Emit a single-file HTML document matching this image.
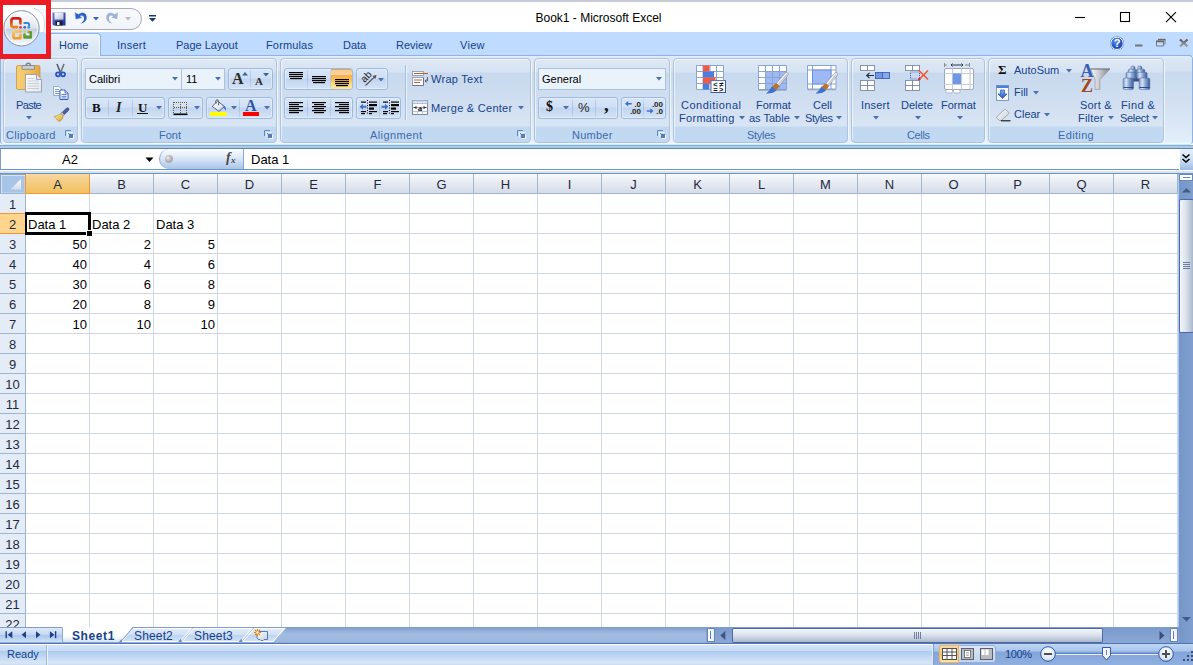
<!DOCTYPE html>
<html>
<head>
<meta charset="utf-8">
<title>Book1 - Microsoft Excel</title>
<style>
html,body{margin:0;padding:0;}
body{width:1193px;height:665px;overflow:hidden;background:#fff;font-family:"Liberation Sans",sans-serif;font-size:11px;color:#15428b;}
#app{position:relative;width:1193px;height:665px;overflow:hidden;background:#fff;}
.abs,#app div,#app span,#app svg{position:absolute;}
#app div,#app span{white-space:nowrap;line-height:1;}
/* title bar */
#titlebar{left:0;top:0;width:1193px;height:32px;background:#fff;}
#topline{left:0;top:0;width:1193px;height:2px;background:#c5ccd8;}
#title{left:0;top:12px;width:1197px;text-align:center;font-size:12px;color:#000;}
/* tab strip */
#tabstrip{left:0;top:32px;width:1193px;height:24px;background:#bfdbff;}
.tab{top:40px;font-size:11px;color:#15428b;}
#hometab{left:48px;top:33px;width:53px;height:23px;border:1px solid #8db2e3;border-bottom:none;border-radius:4px 4px 0 0;box-sizing:border-box;background:linear-gradient(#eaf2fc,#dce8f7 60%,#dbe6f4);box-shadow:inset 1px 1px 0 #f4f9ff,inset -1px 0 0 #f4f9ff;}
/* ribbon */
#ribbon{left:0px;top:55px;width:1193px;height:90px;box-sizing:border-box;border:1px solid #8db2e3;border-bottom-color:#b5f5ff;border-radius:4px;background:linear-gradient(#e3ecf8 0px,#dbe6f4 3px,#d5e1f1 15px,#c9daee 16px,#d3e1f2 50px,#e3eefb 86px,#f0f8ff 87px,#f0f8ff 88px);}
#ribbonshadow{left:0;top:145px;width:1193px;height:4px;background:linear-gradient(#94a9c9 0,#94a9c9 1px,#afc6e6 1px,#b2c9e8 3px,#6186b5 3px);}
.grp{top:58px;height:85px;box-sizing:border-box;border:1px solid #b1c4de;border-radius:4px;box-shadow:1px 1px 0 #f0f6fd,inset 1px 1px 0 rgba(255,255,255,.55);background:linear-gradient(#dee8f5 0px,#d6e3f3 13px,#c8d9ee 14px,#d2e0f1 50px,#d8e5f4 67px,#c2d8f1 68px,#c1d9f3 83px);}
.glabel{top:130px;font-size:11px;color:#3e6aaa;text-align:center;}
.rt{font-size:11px;color:#15428b;}
.btnrow{height:22px;box-sizing:border-box;border:1px solid #9ebae1;border-radius:3px;background:linear-gradient(#d7e5f7 0,#d0e0f5 9px,#c2d5ef 10px,#d4e3f6 20px);box-shadow:inset 0 0 0 1px rgba(255,255,255,.35);}
.bsep{top:0;width:1px;height:20px;background:linear-gradient(rgba(158,186,225,.2),#a9c1e4 50%,rgba(158,186,225,.2));}
.combo{height:22px;box-sizing:border-box;border:1px solid #abc1de;background:#eaf2fb;color:#000;font-size:11px;}
/* formula bar */
#fbar{left:0;top:148px;width:1193px;height:26px;background:#c4daf5;}
/* grid */
#grid{left:0;top:174px;width:1179px;height:453px;background:#fff;overflow:hidden;}
.ch{top:0;height:19px;width:63px;text-align:center;font-size:13px;color:#1f2b3d;line-height:21px !important;background:linear-gradient(#f9fbfd,#e6ebf3 45%,#d6dce8);border-right:1px solid #9eb6ce;border-bottom:1px solid #9eb6ce;}
.rh{left:0;width:25px;height:19px;text-align:center;font-size:13px;color:#1f2b3d;line-height:21px !important;background:#e4ecf7;border-right:1px solid #9eb6ce;border-bottom:1px solid #9eb6ce;}
.c{font-size:13px;color:#000;height:19px;line-height:22px !important;}
.r{text-align:right;width:60px;}
/* bottom */
#tabbar{left:0;top:627px;width:1193px;height:16px;background:linear-gradient(#7b9ccb 0,#8eabd6 3px,#a3bbe0 7px,#9cb7de 15px,#8aa8d4 16px);}
#statusbar{left:0;top:643px;width:1193px;height:22px;background:linear-gradient(#4f76b0 0,#4f76b0 1px,#fff 1px,#fff 2px,#d5e4f9 2px,#c5dbf6 8px,#adcbf0 8px,#d9e6f7 20px,#c9dcf4 22px);}
</style>
</head>
<body>
<div id="app">
<!-- TITLE BAR -->
<div id="titlebar"></div>
<div id="topline"></div>
<div id="title">Book1 - Microsoft Excel</div>
<!-- TAB STRIP -->
<div id="tabstrip"></div>
<div id="ribbonshadow"></div>
<div id="ribbon"></div>
<div id="hometab"></div>
<span class="tab" style="left:59px">Home</span>
<span class="tab" style="left:117px;letter-spacing:0.25px">Insert</span>
<span class="tab" style="left:176px">Page Layout</span>
<span class="tab" style="left:266px;letter-spacing:0.15px">Formulas</span>
<span class="tab" style="left:343px">Data</span>
<span class="tab" style="left:396px">Review</span>
<span class="tab" style="left:460px;letter-spacing:0.3px">View</span>
<!-- RIBBON -->
<!--GROUPS-->
<!-- group frames -->
<div class="grp" style="left:3px;width:75px"></div>
<div class="grp" style="left:81px;width:196px"></div>
<div class="grp" style="left:280px;width:251px"></div>
<div class="grp" style="left:534px;width:136px"></div>
<div class="grp" style="left:673px;width:175px"></div>
<div class="grp" style="left:851px;width:134px"></div>
<div class="grp" style="left:988px;width:176px"></div>
<!-- group labels -->
<span class="glabel" style="left:6px;letter-spacing:0.3px">Clipboard</span>
<span class="glabel" style="left:159px">Font</span>
<span class="glabel" style="left:370px;letter-spacing:0.4px">Alignment</span>
<span class="glabel" style="left:572px;letter-spacing:0.25px">Number</span>
<span class="glabel" style="left:747px;letter-spacing:-0.3px">Styles</span>
<span class="glabel" style="left:907px;letter-spacing:-0.35px">Cells</span>
<span class="glabel" style="left:1058px;letter-spacing:0.35px">Editing</span>
<svg style="left:65px;top:130px" width="9" height="9"><path d="M0.500 6V0.500H6" fill="none" stroke="#6688bd" stroke-width="1"/><path d="M2.500 7.500V2.500H7.500" fill="none" stroke="#fff" stroke-width="0.800" opacity="0.800"/><rect x="4" y="4" width="4" height="4" fill="#5a7cb5"/><path d="M3 3l3 3" stroke="#5a7cb5" stroke-width="1"/><path d="M5 8.500h3.500V5" fill="none" stroke="#fff" stroke-width="0.800"/></svg><svg style="left:264px;top:130px" width="9" height="9"><path d="M0.500 6V0.500H6" fill="none" stroke="#6688bd" stroke-width="1"/><path d="M2.500 7.500V2.500H7.500" fill="none" stroke="#fff" stroke-width="0.800" opacity="0.800"/><rect x="4" y="4" width="4" height="4" fill="#5a7cb5"/><path d="M3 3l3 3" stroke="#5a7cb5" stroke-width="1"/><path d="M5 8.500h3.500V5" fill="none" stroke="#fff" stroke-width="0.800"/></svg><svg style="left:517px;top:130px" width="9" height="9"><path d="M0.500 6V0.500H6" fill="none" stroke="#6688bd" stroke-width="1"/><path d="M2.500 7.500V2.500H7.500" fill="none" stroke="#fff" stroke-width="0.800" opacity="0.800"/><rect x="4" y="4" width="4" height="4" fill="#5a7cb5"/><path d="M3 3l3 3" stroke="#5a7cb5" stroke-width="1"/><path d="M5 8.500h3.500V5" fill="none" stroke="#fff" stroke-width="0.800"/></svg><svg style="left:657px;top:130px" width="9" height="9"><path d="M0.500 6V0.500H6" fill="none" stroke="#6688bd" stroke-width="1"/><path d="M2.500 7.500V2.500H7.500" fill="none" stroke="#fff" stroke-width="0.800" opacity="0.800"/><rect x="4" y="4" width="4" height="4" fill="#5a7cb5"/><path d="M3 3l3 3" stroke="#5a7cb5" stroke-width="1"/><path d="M5 8.500h3.500V5" fill="none" stroke="#fff" stroke-width="0.800"/></svg>
<!-- CLIPBOARD -->
<span class="rt" style="left:16px;top:100px;letter-spacing:-0.6px">Paste</span>

<!-- clipboard icons -->
<svg id="ic-paste" style="left:15px;top:62px" width="28" height="32">
<defs><linearGradient id="pb" x1="0" y1="0" x2="1" y2="0"><stop offset="0" stop-color="#f6cf7a"/><stop offset="0.5" stop-color="#f3c263"/><stop offset="1" stop-color="#e2a843"/></linearGradient>
<linearGradient id="pp" x1="0" y1="0" x2="1" y2="1"><stop offset="0" stop-color="#ffffff"/><stop offset="1" stop-color="#e1e6ef"/></linearGradient></defs>
<rect x="1.5" y="3.500" width="23.500" height="24" rx="1.500" fill="url(#pb)" stroke="#c8963f" stroke-width="0.800"/>
<path d="M7 3.500h12.500v3.800H7z" fill="#c9ced6" stroke="#7d838d" stroke-width="0.800"/>
<path d="M11 3.500c0-3 4.500-3 4.500 0" fill="none" stroke="#7d838d" stroke-width="1.300"/>
<path d="M10.500 12.500h11l5 5v12.500h-16z" fill="url(#pp)" stroke="#8a93a6" stroke-width="0.800"/>
<path d="M21.500 12.500v5h5" fill="#dfe4ee" stroke="#8a93a6" stroke-width="0.800"/>
<path d="M12.500 16.500h7M12.500 19h11.500M12.500 21.500h11.500M12.500 24h11.500M12.500 26.500h11.500" stroke="#c3c8d2" stroke-width="0.900"/>
</svg>
<svg style="left:26px;top:116px" width="6" height="4"><path d="M0 0h6l-3 3.500z" fill="#4d6fae"/></svg>
<svg id="ic-cut" style="left:55px;top:63px" width="11" height="15">
<path d="M2 1l3.200 8M9 1L5.800 9" stroke="#6b7380" stroke-width="1.600" fill="none"/>
<path d="M2 1l3.200 8" stroke="#3c4452" stroke-width="0.600" fill="none"/>
<circle cx="3" cy="11.300" r="2" fill="none" stroke="#2a55c0" stroke-width="1.700"/>
<circle cx="8" cy="11.300" r="2" fill="none" stroke="#2a55c0" stroke-width="1.700"/>
<path d="M4.500 9.500l1-1.500 1 1.500" fill="#2a55c0"/>
</svg>
<svg id="ic-copy" style="left:53px;top:86px" width="16" height="14">
<path d="M0.500 0.500h5.500l2.500 2.500v6.500h-8z" fill="#fff" stroke="#8c9ab8" stroke-width="0.800"/>
<path d="M2 3.500h4M2 5.500h5M2 7.500h5" stroke="#5c8ad6" stroke-width="0.900"/>
<path d="M7 4h5l3 3v6.500h-8z" fill="#fff" stroke="#2b50a8" stroke-width="0.900"/>
<path d="M12 4v3h3" fill="#d3def0" stroke="#2b50a8" stroke-width="0.800"/>
<path d="M8.500 8.500h5M8.500 10.300h5M8.500 12h5" stroke="#3d6dcc" stroke-width="0.900"/>
</svg>
<svg id="ic-brush" style="left:53px;top:107px" width="17" height="16">
<defs><linearGradient id="br" x1="0" y1="0" x2="1" y2="1"><stop offset="0" stop-color="#fbe9a8"/><stop offset="0.600" stop-color="#e9c35a"/><stop offset="1" stop-color="#b98a2a"/></linearGradient></defs>
<path d="M15.500 1.200c0.800 0.800 0.600 1.600 0 2.200l-4.300 4.300-2.200-2.200 4.300-4.300c0.600-0.600 1.400-0.800 2.200 0z" fill="#4a5aa8" stroke="#2d3570" stroke-width="0.500"/>
<path d="M9 5.500l2.200 2.200-1 1.200-2.400-2.400z" fill="#c9ccd4" stroke="#7b8090" stroke-width="0.500"/>
<path d="M7.800 6.500l2.400 2.400c0 2-2 5-4 5.800L1 9.500c2-0.300 5-1.500 6.800-3z" fill="url(#br)" stroke="#a37a25" stroke-width="0.500"/>
</svg>
<!-- FONT -->
<div class="combo" style="left:85px;top:68px;width:97px"><span style="left:3px;top:5px">Calibri</span></div>
<div class="combo" style="left:181px;top:68px;width:44px"><span style="left:4px;top:5px">11</span></div>
<div class="btnrow" style="left:228px;top:68px;width:45px"><div class="bsep" style="left:21px"></div></div>
<div class="btnrow" style="left:85px;top:97px;width:80px"><div class="bsep" style="left:22px"></div><div class="bsep" style="left:46px"></div></div>
<div class="btnrow" style="left:168px;top:97px;width:35px"></div>
<div class="btnrow" style="left:206px;top:97px;width:67px"><div class="bsep" style="left:32px"></div></div>

<!-- font icons -->
<svg style="left:172px;top:77px" width="6" height="4"><path d="M0 0h6l-3 3.500z" fill="#4d6fae"/></svg><svg style="left:215px;top:77px" width="6" height="4"><path d="M0 0h6l-3 3.500z" fill="#4d6fae"/></svg>
<span style="left:232px;top:71px;font-family:'Liberation Serif',serif;font-weight:bold;font-size:16px;color:#2b2b2b">A</span>
<svg style="left:242px;top:72px" width="6" height="4"><path d="M0 3.500h6l-3-3.500z" fill="#3b62ac"/></svg>
<span style="left:255px;top:76px;font-family:'Liberation Serif',serif;font-weight:bold;font-size:11px;color:#2b2b2b">A</span>
<svg style="left:263px;top:73px" width="6" height="4"><path d="M0 0h6l-3 3.500z" fill="#3b62ac"/></svg>
<span style="left:92px;top:101px;font-family:'Liberation Serif',serif;font-weight:bold;font-size:13px;color:#111">B</span>
<span style="left:116px;top:101px;font-family:'Liberation Serif',serif;font-weight:bold;font-style:italic;font-size:14px;color:#222">I</span>
<span style="left:138px;top:101px;font-family:'Liberation Serif',serif;font-weight:bold;font-size:13px;color:#111">U</span>
<div style="left:137px;top:113px;width:11px;height:1px;background:#111"></div>
<svg style="left:156px;top:106px" width="6" height="4"><path d="M0 0h6l-3 3.500z" fill="#4d6fae"/></svg>
<svg id="ic-border" style="left:173px;top:102px" width="15" height="14"><path d="M1 0.500h13M1 5.500h13M0.500 0v11M7.500 0v11M13.500 0v11" stroke="#6b5a3a" stroke-width="1" stroke-dasharray="1 1" fill="none"/><rect x="0.500" y="11.500" width="14" height="1.600" fill="#000"/></svg>
<svg style="left:194px;top:106px" width="6" height="4"><path d="M0 0h6l-3 3.500z" fill="#4d6fae"/></svg>
<svg id="ic-fill" style="left:209px;top:98px" width="19" height="19">
<defs><linearGradient id="bk" x1="0" y1="0" x2="1" y2="1"><stop offset="0" stop-color="#ffffff"/><stop offset="0.600" stop-color="#e3e9f3"/><stop offset="1" stop-color="#98a9c7"/></linearGradient></defs>
<path d="M8.500 3.200l7 5.200-5.500 5-6.800-5z" fill="url(#bk)" stroke="#3d4658" stroke-width="0.800"/>
<path d="M7.200 5.500c-1.500-2.500 0.500-4.800 2-3.200 0.800 0.900 0.300 3.500 0.300 5" fill="none" stroke="#4a4f5c" stroke-width="0.900"/>
<path d="M15 8c1.800 0.500 2.500 2.500 2 5-0.800-1.500-1.500-2.500-3-3.500z" fill="#3a74d8"/>
<rect x="1" y="14" width="16.500" height="4" fill="#ffff00"/>
</svg>
<svg style="left:231px;top:106px" width="6" height="4"><path d="M0 0h6l-3 3.500z" fill="#4d6fae"/></svg>
<span style="left:245px;top:98px;font-family:'Liberation Serif',serif;font-weight:bold;font-size:16px;color:#2f55a8">A</span>
<div style="left:243px;top:112px;width:16px;height:4px;background:#ff0000"></div>
<svg style="left:264px;top:106px" width="6" height="4"><path d="M0 0h6l-3 3.500z" fill="#4d6fae"/></svg>
<!-- ALIGNMENT -->
<div class="btnrow" style="left:284px;top:68px;width:69px"><div class="bsep" style="left:22px"></div><div class="bsep" style="left:45px"></div><div id="orangebtn" style="left:46px;top:0;width:21px;height:20px;background:linear-gradient(#f5c98f 0,#f9d49c 28%,#fbae48 32%,#fcbd58 55%,#fdd983 75%,#fee69a 100%);border-radius:0 2px 2px 0;box-shadow:inset 0 1px 0 #dfa669"></div></div>
<div class="btnrow" style="left:356px;top:68px;width:32px"></div>
<div class="btnrow" style="left:284px;top:97px;width:69px"><div class="bsep" style="left:22px"></div><div class="bsep" style="left:45px"></div></div>
<div class="btnrow" style="left:356px;top:97px;width:45px"><div class="bsep" style="left:22px"></div></div>
<div style="left:405px;top:65px;width:1px;height:55px;background:#a5bfe0;box-shadow:1px 0 0 #e9f1fb"></div>
<span class="rt" style="left:431px;top:74px;letter-spacing:0.27px">Wrap Text</span>
<span class="rt" style="left:431px;top:103px;letter-spacing:0.27px">Merge &amp; Center</span>
<!-- alignment icons -->
<svg style="left:289px;top:72px" width="14" height="8" fill="#000"><rect x="0.0" y="0" width="14" height="1.200"/><rect x="0.0" y="2" width="14" height="1.200"/><rect x="0.0" y="4" width="14" height="1.200"/><rect x="1.0" y="6" width="12" height="1.200"/></svg>
<svg style="left:312px;top:76px" width="14" height="8" fill="#000"><rect x="0.0" y="0" width="14" height="1.200"/><rect x="0.0" y="2" width="14" height="1.200"/><rect x="0.0" y="4" width="14" height="1.200"/><rect x="1.0" y="6" width="12" height="1.200"/></svg>
<svg style="left:335px;top:79px" width="14" height="8" fill="#000"><rect x="0.0" y="0" width="14" height="1.200"/><rect x="0.0" y="2" width="14" height="1.200"/><rect x="0.0" y="4" width="14" height="1.200"/><rect x="1.0" y="6" width="12" height="1.200"/></svg>
<svg style="left:289px;top:102px" width="14" height="12" fill="#000"><rect x="0" y="0" width="14" height="1.200"/><rect x="0" y="2" width="10" height="1.200"/><rect x="0" y="4" width="14" height="1.200"/><rect x="0" y="6" width="10" height="1.200"/><rect x="0" y="8" width="14" height="1.200"/><rect x="0" y="10" width="10" height="1.200"/></svg>
<svg style="left:312px;top:102px" width="14" height="12" fill="#000"><rect x="0.0" y="0" width="14" height="1.200"/><rect x="2.0" y="2" width="10" height="1.200"/><rect x="0.0" y="4" width="14" height="1.200"/><rect x="2.0" y="6" width="10" height="1.200"/><rect x="0.0" y="8" width="14" height="1.200"/><rect x="2.0" y="10" width="10" height="1.200"/></svg>
<svg style="left:335px;top:102px" width="14" height="12" fill="#000"><rect x="0" y="0" width="14" height="1.200"/><rect x="4" y="2" width="10" height="1.200"/><rect x="0" y="4" width="14" height="1.200"/><rect x="4" y="6" width="10" height="1.200"/><rect x="0" y="8" width="14" height="1.200"/><rect x="4" y="10" width="10" height="1.200"/></svg>
<svg id="ic-orient" style="left:360px;top:71px" width="18" height="16"><text x="0" y="0" transform="translate(4.500 12) rotate(-45)" font-family="Liberation Sans, sans-serif" font-size="10" fill="#1a1a1a">ab</text><path d="M5.500 14.500L15.500 5" stroke="#555" stroke-width="1.100"/><path d="M16.500 4l-4 1 3 3z" fill="#555"/></svg>
<svg style="left:378px;top:78px" width="6" height="4"><path d="M0 0h6l-3 3.500z" fill="#4d6fae"/></svg>
<svg id="ic-outdent" style="left:359px;top:100px" width="18" height="15"><path d="M8.500 0v15" stroke="#000" stroke-width="1" stroke-dasharray="1 1.500"/><g fill="#000"><rect x="2" y="1.500" width="5" height="1.200"/><rect x="10" y="1.500" width="8" height="1.200"/><rect x="10" y="4" width="8" height="2.200"/><rect x="10" y="7.500" width="5" height="2.200"/><rect x="10" y="11" width="8" height="1.200"/><rect x="2" y="11" width="5" height="1.200"/><rect x="2" y="13" width="4" height="1.200"/><rect x="10" y="13" width="3" height="1.200"/></g><path d="M0.500 6.800l3.500-3v2h3.500v2H4v2z" fill="#3c6fd6"/></svg>
<svg id="ic-indent" style="left:381px;top:100px" width="18" height="15"><path d="M8.500 0v15" stroke="#000" stroke-width="1" stroke-dasharray="1 1.500"/><g fill="#000"><rect x="2" y="1.500" width="5" height="1.200"/><rect x="10" y="1.500" width="8" height="1.200"/><rect x="10" y="4" width="8" height="2.200"/><rect x="10" y="7.500" width="5" height="2.200"/><rect x="10" y="11" width="8" height="1.200"/><rect x="2" y="11" width="5" height="1.200"/><rect x="2" y="13" width="4" height="1.200"/><rect x="10" y="13" width="3" height="1.200"/></g><path d="M7.500 6.800l-3.500-3v2H0.500v2H4v2z" fill="#3c6fd6"/></svg>
<svg id="ic-wrap" style="left:412px;top:71px" width="17" height="15"><rect x="0.500" y="0.500" width="11" height="4" fill="#fff" stroke="#8a93a6" stroke-width="0.800"/><path d="M2 2.500h14" stroke="#b0673a" stroke-width="1.100"/><rect x="0.500" y="6.500" width="11" height="8" fill="#fff" stroke="#8a93a6" stroke-width="0.800"/><path d="M0.500 14.500h11v-8" fill="none" stroke="#5a6a8c" stroke-width="0.800"/><path d="M2 9h8M2 11.500h6" stroke="#b0673a" stroke-width="1.100"/><path d="M15.500 6v4h-2M14.500 8.500l-1.500 1.500 1.500 1.500" fill="none" stroke="#555" stroke-width="0.900"/></svg>
<svg id="ic-merge" style="left:412px;top:100px" width="16" height="15"><rect x="0.500" y="0.500" width="15" height="14" fill="#fff" stroke="#6d7fa3" stroke-width="0.900"/><path d="M0.500 3.500h15M0.500 11.500h15M5.500 0.500v3M10.500 0.500v3M5.500 11.500v3M10.500 11.500v3" stroke="#9fb0cc" stroke-width="0.800"/><rect x="0.500" y="0.500" width="15" height="2" fill="#c9d6ea"/><text x="8" y="10.500" font-family="Liberation Serif, serif" font-weight="bold" font-size="9" text-anchor="middle" fill="#111">a</text><path d="M1.500 7.500h3M14.500 7.500h-3M3.500 6l1.500 1.500-1.500 1.500M12.500 6l-1.500 1.500 1.500 1.500" stroke="#222" stroke-width="0.900" fill="none"/></svg>
<svg style="left:518px;top:106px" width="6" height="4"><path d="M0 0h6l-3 3.500z" fill="#4d6fae"/></svg>
<!-- NUMBER -->
<div class="combo" style="left:538px;top:68px;width:128px"><span style="left:3px;top:5px">General</span></div>
<div class="btnrow" style="left:538px;top:97px;width:80px"><div class="bsep" style="left:33px"></div><div class="bsep" style="left:56px"></div></div>
<div class="btnrow" style="left:621px;top:97px;width:45px"><div class="bsep" style="left:21px"></div></div>
<!-- number icons -->
<svg style="left:656px;top:77px" width="6" height="4"><path d="M0 0h6l-3 3.500z" fill="#4d6fae"/></svg>
<span style="left:546px;top:100px;font-family:'Liberation Serif',serif;font-weight:bold;font-size:14px;color:#111">$</span>
<svg style="left:563px;top:106px" width="6" height="4"><path d="M0 0h6l-3 3.500z" fill="#4d6fae"/></svg>
<span style="left:578px;top:101px;font-size:13px;color:#222">%</span>
<span style="left:604px;top:95px;font-family:'Liberation Serif',serif;font-weight:bold;font-size:19px;color:#111">,</span>
<svg id="ic-incdec" style="left:624px;top:100px" width="18" height="15"><text x="17" y="6.500" font-family="Liberation Sans, sans-serif" font-size="8" font-weight="bold" text-anchor="end" fill="#222">.0</text><text x="17" y="13.800" font-family="Liberation Sans, sans-serif" font-size="8" font-weight="bold" text-anchor="end" fill="#222">.00</text><path d="M1 3.800l3.200-2.800v2h3.500v1.600H4.200v2z" fill="#3c6fd6"/></svg>
<svg id="ic-decdec" style="left:645px;top:100px" width="19" height="15"><text x="18" y="6.500" font-family="Liberation Sans, sans-serif" font-size="8" font-weight="bold" text-anchor="end" fill="#222">.00</text><text x="18" y="13.800" font-family="Liberation Sans, sans-serif" font-size="8" font-weight="bold" text-anchor="end" fill="#222">.0</text><path d="M8.500 11l-3.200-2.800v2H1.800v1.600h3.500v2z" fill="#3c6fd6"/></svg>
<!-- STYLES -->
<span class="rt" style="left:681px;top:100px;letter-spacing:0.5px">Conditional</span>
<span class="rt" style="left:679px;top:113px;letter-spacing:0.3px">Formatting</span>
<span class="rt" style="left:756px;top:100px">Format</span>
<span class="rt" style="left:749px;top:113px">as Table</span>
<span class="rt" style="left:813px;top:100px">Cell</span>
<span class="rt" style="left:805px;top:113px;letter-spacing:-0.4px">Styles</span>
<!-- styles icons -->
<svg id="ic-cf" style="left:695px;top:64px" width="33" height="30">
<rect x="1.500" y="1.500" width="27" height="24" fill="#fff"/>
<path d="M1.500 1.500h27v24h-27zM1.500 7.500h27M1.500 13.500h27M1.500 19.500h27M8 1.500v24M15 1.500v24M21.500 1.500v24" fill="none" stroke="#8aa3cf" stroke-width="1"/>
<rect x="8" y="1.500" width="6.500" height="6" fill="#f25a45"/><rect x="8" y="7.500" width="11" height="6" fill="#4a7de0"/><rect x="8" y="13.500" width="12.500" height="6" fill="#f25a45"/><rect x="8" y="19.500" width="6" height="6" fill="#4a7de0"/>
<rect x="16" y="16.500" width="14.500" height="12" fill="#f7f9fd" stroke="#5f76a8" stroke-width="1"/>
<path d="M16.500 28.500h14v-12" fill="none" stroke="#3f5a94" stroke-width="1"/>
<g font-family="Liberation Sans, sans-serif" font-size="7.500" font-weight="bold" fill="#111" text-anchor="middle"><text x="20.500" y="23">&lt;</text><text x="26.300" y="23">≠</text><text x="20.500" y="28">=</text><text x="26.300" y="28">&gt;</text></g>
</svg>
<svg id="ic-fat" style="left:757px;top:64px" width="34" height="30">
<rect x="1.500" y="1.500" width="28" height="24" fill="#fff"/>
<rect x="8.500" y="7.500" width="21" height="18" fill="#9db8f2"/>
<path d="M1.500 1.500h28v24h-28zM1.500 7.500h28M1.500 13.500h28M1.500 19.500h28M8.500 1.500v24M15.500 1.500v24M22.500 1.500v24" fill="none" stroke="#8aa3cf" stroke-width="1"/>
<path d="M1.500 26.300h28" stroke="#6f86b3" stroke-width="0.800" opacity="0.700"/>
<g transform="translate(-1.200 1)"><path d="M29.600 7.800c1.500-1 3.300 0.400 2.600 2.200l-8.700 11-3-2.600z" fill="#f3f4f6" stroke="#8b8f99" stroke-width="0.700"/><path d="M31 9.500l-8.500 10.500" stroke="#c3c6cd" stroke-width="1.200"/><path d="M20.300 18.200l3.400 2.900-3.300 4.400-4.300-3.600z" fill="#b9732a"/><path d="M16.300 21.700l4.200 3.600c-1.500 2.200-5 3.300-9.800 3.200 2.500-1.800 4-4 5.600-6.800z" fill="#3d72d4"/><path d="M16.300 21.700c-1.500 2.800-3 5-5.600 6.800" fill="none" stroke="#2a57b0" stroke-width="0.600"/></g>
</svg>
<svg id="ic-cs" style="left:806px;top:64px" width="34" height="30">
<rect x="1.500" y="1.500" width="28.500" height="23.500" fill="#fff"/>
<path d="M1.500 1.500h28.500v23.500h-28.500zM1.500 6h28.500M1.500 20h28.500M6.500 1.500v23.500M25 1.500v23.500" fill="none" stroke="#8aa3cf" stroke-width="1"/>
<rect x="6.500" y="6" width="18.500" height="14" fill="#9db8f2" stroke="#5f8be8" stroke-width="0.800"/>
<path d="M1.500 25.800h28.500" stroke="#6f86b3" stroke-width="0.800" opacity="0.700"/>
<g transform="translate(0.500 0)"><g transform="translate(-1.200 1)"><path d="M29.600 7.800c1.500-1 3.300 0.400 2.600 2.200l-8.700 11-3-2.600z" fill="#f3f4f6" stroke="#8b8f99" stroke-width="0.700"/><path d="M31 9.500l-8.500 10.500" stroke="#c3c6cd" stroke-width="1.200"/><path d="M20.300 18.200l3.400 2.900-3.300 4.400-4.300-3.600z" fill="#b9732a"/><path d="M16.300 21.700l4.200 3.600c-1.500 2.200-5 3.300-9.800 3.200 2.500-1.800 4-4 5.600-6.800z" fill="#3d72d4"/><path d="M16.300 21.700c-1.500 2.800-3 5-5.600 6.800" fill="none" stroke="#2a57b0" stroke-width="0.600"/></g></g>
</svg>
<svg style="left:739px;top:116px" width="6" height="4"><path d="M0 0h6l-3 3.500z" fill="#4d6fae"/></svg><svg style="left:794px;top:116px" width="6" height="4"><path d="M0 0h6l-3 3.500z" fill="#4d6fae"/></svg><svg style="left:836px;top:116px" width="6" height="4"><path d="M0 0h6l-3 3.500z" fill="#4d6fae"/></svg>
<!-- CELLS -->
<span class="rt" style="left:861px;top:100px;letter-spacing:0.2px">Insert</span>
<span class="rt" style="left:901px;top:100px">Delete</span>
<span class="rt" style="left:941px;top:100px">Format</span>
<!-- EDITING -->
<span class="rt" style="left:1014px;top:65px">AutoSum</span>
<span class="rt" style="left:1014px;top:87px">Fill</span>
<span class="rt" style="left:1014px;top:109px">Clear</span>
<span class="rt" style="left:1080px;top:100px;letter-spacing:0.2px">Sort &amp;</span>
<span class="rt" style="left:1078px;top:113px;letter-spacing:0.2px">Filter</span>
<span class="rt" style="left:1121px;top:100px;letter-spacing:0.4px">Find &amp;</span>
<span class="rt" style="left:1120px;top:113px;letter-spacing:-0.3px">Select</span>
<!-- cells icons -->
<svg id="ic-ins" style="left:859px;top:64px" width="32" height="28"><rect x="1.5" y="1.5" width="7" height="5" fill="#fff" stroke="#7d8aa3" stroke-width="0.900"/><rect x="8.5" y="1.5" width="7" height="5" fill="#fff" stroke="#7d8aa3" stroke-width="0.900"/><rect x="1.5" y="16.5" width="7" height="5" fill="#fff" stroke="#7d8aa3" stroke-width="0.900"/><rect x="8.5" y="16.5" width="7" height="5" fill="#fff" stroke="#7d8aa3" stroke-width="0.900"/><rect x="1.5" y="21.5" width="7" height="5" fill="#fff" stroke="#7d8aa3" stroke-width="0.900"/><rect x="8.5" y="21.5" width="7" height="5" fill="#fff" stroke="#7d8aa3" stroke-width="0.900"/><rect x="16.500" y="8.500" width="7" height="6" fill="#6f97e6" stroke="#3f62ad" stroke-width="0.900"/><rect x="23.500" y="8.500" width="7" height="6" fill="#86a9ee" stroke="#3f62ad" stroke-width="0.900"/><path d="M15 11.500H8M10.500 9l-2.800 2.500 2.800 2.500" fill="none" stroke="#27324a" stroke-width="1.200"/></svg>
<svg id="ic-del" style="left:904px;top:64px" width="27" height="28"><rect x="1.5" y="1.5" width="7" height="5" fill="#fff" stroke="#7d8aa3" stroke-width="0.900"/><rect x="8.5" y="1.5" width="7" height="5" fill="#fff" stroke="#7d8aa3" stroke-width="0.900"/><rect x="1.5" y="16.5" width="7" height="5" fill="#fff" stroke="#7d8aa3" stroke-width="0.900"/><rect x="8.5" y="16.5" width="7" height="5" fill="#fff" stroke="#7d8aa3" stroke-width="0.900"/><rect x="1.5" y="21.5" width="7" height="5" fill="#fff" stroke="#7d8aa3" stroke-width="0.900"/><rect x="8.5" y="21.5" width="7" height="5" fill="#fff" stroke="#7d8aa3" stroke-width="0.900"/><rect x="6.500" y="8" width="9" height="7" fill="none" stroke="#3f62ad" stroke-width="1" stroke-dasharray="1 1"/><path d="M14.500 6l9.500 9.500M24 6.500l-9.500 9.500" stroke="#f2552c" stroke-width="1.500"/><path d="M14 16.500l3-1-2-2z" fill="#e02020"/></svg>
<svg id="ic-fmt" style="left:943px;top:63px" width="32" height="31">
<path d="M1.500 0.500v3M26.500 0.500v3M2.500 2h2M22.500 2h3" stroke="#333" stroke-width="1" stroke-dasharray="1 1" fill="none"/><path d="M8 2h12M9.500 0.500L8 2l1.500 1.500M18.500 0.500L20 2l-1.500 1.500" stroke="#2c3a55" stroke-width="1" fill="none"/>
<path d="M3 26h6.500v2.500c0 1-0.500 1.500-1.500 1.500H4.500C3.500 30 3 29.500 3 28.500zM10.500 26H17v2.500c0 1-0.500 1.500-1.500 1.500H12c-1 0-1.500-0.500-1.500-1.500z" fill="#fff" stroke="#9aa6bd" stroke-width="0.800"/>
<rect x="1.500" y="5.500" width="29" height="21" rx="1.500" fill="#fff" stroke="#9aa6bd" stroke-width="1"/>
<path d="M1.500 10.500h29M1.500 21.500h29M9.500 5.500v21M18.500 5.500v21M27 5.500v21" stroke="#c4ccda" stroke-width="1.200"/>
<rect x="9.800" y="10.500" width="8.200" height="10.500" fill="#6f97e6"/>
</svg>
<svg style="left:873px;top:116px" width="6" height="4"><path d="M0 0h6l-3 3.500z" fill="#4d6fae"/></svg><svg style="left:915px;top:116px" width="6" height="4"><path d="M0 0h6l-3 3.500z" fill="#4d6fae"/></svg><svg style="left:957px;top:116px" width="6" height="4"><path d="M0 0h6l-3 3.500z" fill="#4d6fae"/></svg>
<!-- editing icons -->
<span style="left:998px;top:63px;font-family:'Liberation Serif',serif;font-weight:bold;font-size:13px;color:#111">Σ</span>
<svg style="left:1066px;top:69px" width="6" height="4"><path d="M0 0h6l-3 3.500z" fill="#4d6fae"/></svg><svg style="left:1033px;top:91px" width="6" height="4"><path d="M0 0h6l-3 3.500z" fill="#4d6fae"/></svg><svg style="left:1044px;top:113px" width="6" height="4"><path d="M0 0h6l-3 3.500z" fill="#4d6fae"/></svg><svg style="left:1108px;top:116px" width="6" height="4"><path d="M0 0h6l-3 3.500z" fill="#4d6fae"/></svg><svg style="left:1152px;top:116px" width="6" height="4"><path d="M0 0h6l-3 3.500z" fill="#4d6fae"/></svg>
<svg id="ic-filldn" style="left:996px;top:85px" width="14" height="16"><defs><linearGradient id="fd" x1="0" y1="0" x2="0" y2="1"><stop offset="0" stop-color="#7fb0f5"/><stop offset="1" stop-color="#1f55c0"/></linearGradient></defs><rect x="0.500" y="0.500" width="12" height="15" fill="#f4f8fd" stroke="#7d92b8" stroke-width="0.900"/><rect x="0.500" y="0.500" width="12" height="2.500" fill="#4a7fe0"/><path d="M4.500 5h4v4h2.500l-4.500 4.500L2 9h2.500z" fill="url(#fd)" stroke="#1d46a0" stroke-width="0.600"/></svg>
<svg id="ic-clear" style="left:996px;top:108px" width="15" height="14"><defs><linearGradient id="er" x1="0" y1="0" x2="1" y2="1"><stop offset="0" stop-color="#fff"/><stop offset="1" stop-color="#c8ccd4"/></linearGradient></defs><path d="M1 8.500l7-6.500c0.800-0.700 1.500-0.700 2.300 0l2 2c0.700 0.700 0.700 1.500 0 2.200l-6.800 6.300H3.500L1 10.300c-0.500-0.500-0.500-1.300 0-1.800z" fill="url(#er)" stroke="#8a8f9a" stroke-width="0.700"/><path d="M5 12.800h9.500" stroke="#111" stroke-width="1.100"/></svg>
<svg id="ic-sort" style="left:1080px;top:62px" width="32" height="32">
<defs><linearGradient id="fn" x1="0" y1="0" x2="1" y2="0"><stop offset="0" stop-color="#fafafa"/><stop offset="0.450" stop-color="#c9cbd0"/><stop offset="1" stop-color="#80848d"/></linearGradient></defs>
<path d="M10.500 7h19.500l-10.100 10.700v9.700h-4.800v-9.700z" fill="url(#fn)" stroke="#8a8d95" stroke-width="0.600"/>
<path d="M10.500 7h19.500" stroke="#6f737c" stroke-width="0.900"/>
<text x="0.500" y="14.900" font-family="Liberation Serif, serif" font-weight="bold" font-size="18" fill="#3a5fb8">A</text>
<text x="1" y="29.700" font-family="Liberation Serif, serif" font-weight="bold" font-size="18" fill="#a8461c">Z</text>
</svg>
<svg id="ic-find" style="left:1122px;top:64px" width="30" height="28">
<defs><linearGradient id="bn" x1="0" y1="0" x2="1" y2="0"><stop offset="0" stop-color="#7f9ccc"/><stop offset="0.300" stop-color="#d6e2f4"/><stop offset="0.550" stop-color="#8eaad6"/><stop offset="1" stop-color="#3c5a96"/></linearGradient></defs>
<rect x="11" y="13" width="7" height="4.500" fill="#3a4f80"/>
<g fill="url(#bn)" stroke="#4f6a9e" stroke-width="0.500">
<rect x="8.900" y="2" width="4" height="4" rx="1.500"/><rect x="15.700" y="2" width="4.200" height="4" rx="1.500"/>
<rect x="6.200" y="5.200" width="8.500" height="3.800" rx="1.200"/><rect x="15" y="5.200" width="7.800" height="3.800" rx="1.200"/>
<rect x="4" y="8.300" width="10.700" height="6.500" rx="1.200"/><rect x="15" y="8.300" width="10.100" height="6.500" rx="1.200"/>
<rect x="1.100" y="14" width="10.400" height="11.600" rx="1.500"/><rect x="17.100" y="14" width="10.800" height="11.600" rx="1.500"/>
</g>
<path d="M1.500 23.500h9.600M17.500 23.500h10" stroke="#2f4a86" stroke-width="1.200"/>
</svg>
<!--/GROUPS-->
<!--FBAR-->
<div id="fbar"></div>
<div style="left:0;top:148px;width:1193px;height:1px;background:#6186b5"></div>
<div style="left:1px;top:149px;width:1178px;height:20px;background:#fff"></div>
<div style="left:0;top:149px;width:1px;height:21px;background:#7f9dc9"></div>
<div style="left:0;top:169px;width:1193px;height:1px;background:#6f93be"></div>
<div style="left:0;top:170px;width:1193px;height:3px;background:#d4e5f9"></div>
<div style="left:0;top:170px;width:1193px;height:1px;background:#fff"></div>
<div style="left:0;top:173px;width:1193px;height:1px;background:#6f93be"></div>
<span style="left:62px;top:153px;font-size:13px;color:#000">A2</span>
<svg style="left:145px;top:157px" width="9" height="6"><path d="M0.5 0.5h8l-4 4.5z" fill="#000"/></svg>
<div id="pill" style="left:159px;top:149px;width:85px;height:20px;border-radius:10px 0 0 10px;background:linear-gradient(#fdfeff,#dbe7f8 45%,#a9c4e9);border-left:1px solid #8aa8d4;border-right:1px solid #8aa8d4;box-sizing:border-box"></div>
<div style="left:165px;top:155px;width:8px;height:8px;border-radius:50%;background:radial-gradient(circle at 35% 35%,#e8e8e8,#a8a8a8 60%,#c8ccd2)"></div>
<span style="left:226px;top:151px;font-family:'Liberation Serif',serif;font-style:italic;font-weight:bold;font-size:14px;color:#484848">f<span style="font-size:9px;left:5px;top:5px">x</span></span>
<span style="left:251px;top:153px;font-size:13px;color:#000">Data 1</span>
<div style="left:1179px;top:149px;width:14px;height:21px;background:linear-gradient(#e8f1fc,#c5d9f3 60%,#9fbbe3);border-left:1px solid #fff;box-sizing:border-box"></div>
<svg style="left:1181px;top:153px" width="10" height="11"><path d="M1.5 1.5l3.5 3 3.5-3M1.5 6l3.5 3 3.5-3" fill="none" stroke="#000" stroke-width="1.6"/></svg>
<!--/FBAR-->
<!--GRID-->
<div id="grid">
<div style="left:26px;top:20px;width:1153px;height:433px;background-image:repeating-linear-gradient(90deg,transparent 0,transparent 63px,#d0d7e5 63px,#d0d7e5 64px),repeating-linear-gradient(180deg,transparent 0,transparent 19px,#d0d7e5 19px,#d0d7e5 20px)"></div>
<div id="corner" style="left:0;top:0;width:25px;height:19px;background:#a9c4e9;border-right:1px solid #9eb6ce;border-bottom:1px solid #9eb6ce;box-shadow:inset 1px 1px 0 #8fa7c7,inset 2px 2px 0 #d5e4f5,inset -1px -1px 0 #b4d0f5"></div>
<svg style="left:10px;top:4px" width="12" height="12"><defs><linearGradient id="cg" x1="0" y1="0" x2="0" y2="1"><stop offset="0" stop-color="#fff"/><stop offset="1" stop-color="#d6dbe3"/></linearGradient></defs><path d="M11 1v10.500H0.500z" fill="url(#cg)"/></svg>
<div class="ch" style="left:26px;background:linear-gradient(#f9d99f,#f5cd84 40%,#f1c15f);border-right:1px solid #f29536;border-bottom:1px solid #f29536;box-shadow:-1px 0 0 #f29536">A</div>
<div class="ch" style="left:90px">B</div>
<div class="ch" style="left:154px">C</div>
<div class="ch" style="left:218px">D</div>
<div class="ch" style="left:282px">E</div>
<div class="ch" style="left:346px">F</div>
<div class="ch" style="left:410px">G</div>
<div class="ch" style="left:474px">H</div>
<div class="ch" style="left:538px">I</div>
<div class="ch" style="left:602px">J</div>
<div class="ch" style="left:666px">K</div>
<div class="ch" style="left:730px">L</div>
<div class="ch" style="left:794px">M</div>
<div class="ch" style="left:858px">N</div>
<div class="ch" style="left:922px">O</div>
<div class="ch" style="left:986px">P</div>
<div class="ch" style="left:1050px">Q</div>
<div class="ch" style="left:1114px">R</div>
<div class="rh" style="top:20px">1</div>
<div class="rh" style="top:40px;background:#ffd58d;border-bottom:1px solid #f29536;border-right:1px solid #f29536;box-shadow:0 -1px 0 #f29536">2</div>
<div class="rh" style="top:60px">3</div>
<div class="rh" style="top:80px">4</div>
<div class="rh" style="top:100px">5</div>
<div class="rh" style="top:120px">6</div>
<div class="rh" style="top:140px">7</div>
<div class="rh" style="top:160px">8</div>
<div class="rh" style="top:180px">9</div>
<div class="rh" style="top:200px">10</div>
<div class="rh" style="top:220px">11</div>
<div class="rh" style="top:240px">12</div>
<div class="rh" style="top:260px">13</div>
<div class="rh" style="top:280px">14</div>
<div class="rh" style="top:300px">15</div>
<div class="rh" style="top:320px">16</div>
<div class="rh" style="top:340px">17</div>
<div class="rh" style="top:360px">18</div>
<div class="rh" style="top:380px">19</div>
<div class="rh" style="top:400px">20</div>
<div class="rh" style="top:420px">21</div>
<div class="rh" style="top:440px">22</div>
<span class="c" style="left:28px;top:40px">Data 1</span>
<span class="c" style="left:92px;top:40px">Data 2</span>
<span class="c" style="left:156px;top:40px">Data 3</span>
<span class="c r" style="left:27px;top:60px">50</span>
<span class="c r" style="left:91px;top:60px">2</span>
<span class="c r" style="left:155px;top:60px">5</span>
<span class="c r" style="left:27px;top:80px">40</span>
<span class="c r" style="left:91px;top:80px">4</span>
<span class="c r" style="left:155px;top:80px">6</span>
<span class="c r" style="left:27px;top:100px">30</span>
<span class="c r" style="left:91px;top:100px">6</span>
<span class="c r" style="left:155px;top:100px">8</span>
<span class="c r" style="left:27px;top:120px">20</span>
<span class="c r" style="left:91px;top:120px">8</span>
<span class="c r" style="left:155px;top:120px">9</span>
<span class="c r" style="left:27px;top:140px">10</span>
<span class="c r" style="left:91px;top:140px">10</span>
<span class="c r" style="left:155px;top:140px">10</span>
<div style="left:25px;top:38px;width:66px;height:23px;box-sizing:border-box;border:3px solid #000;border-left-width:2px"></div>
<div style="left:86px;top:56px;width:7px;height:7px;background:#fff"></div>
<div style="left:87px;top:57px;width:5px;height:5px;background:#000"></div>
</div>
<!--/GRID-->
<!--BOTTOM-->
<div id="tabbar"></div>
<div style="left:0;top:627px;width:1193px;height:1px;background:#7f9dc9"></div>
<!-- nav area -->
<div style="left:0;top:628px;width:62px;height:14px;background:linear-gradient(#dfeafa,#c3d7f3 50%,#aac6ec 51%,#cfe0f6)"></div>
<svg style="left:0;top:628px" width="62" height="14" fill="#1c3f8f"><rect x="5.500" y="3.200" width="1.400" height="7"/><path d="M12.300 3.200v7l-4.600-3.500z"/><path d="M26 3.200v7l-4.400-3.500z"/><path d="M36 3.200v7l4.400-3.500z"/><path d="M49.900 3.200v7l4.500-3.500z"/><rect x="54.900" y="3.200" width="1.400" height="7"/></svg>
<!-- sheet tabs -->
<svg style="left:60px;top:627px" width="240" height="16">
<defs><linearGradient id="tg" x1="0" y1="0" x2="0" y2="1"><stop offset="0" stop-color="#e4eefb"/><stop offset="0.480" stop-color="#d0e0f6"/><stop offset="0.520" stop-color="#bdd4f2"/><stop offset="1" stop-color="#d5e4f8"/></linearGradient>
<linearGradient id="tg1" x1="0" y1="0" x2="0" y2="1"><stop offset="0" stop-color="#ffffff"/><stop offset="0.600" stop-color="#ffffff"/><stop offset="1" stop-color="#d2e2f6"/></linearGradient></defs>
<rect x="60" y="0" width="166" height="1" fill="#7f9dc9"/>
<path d="M194 1H226l-12.500 14H181.5z" fill="url(#tg)"/><path d="M194.2 1.500H224.4l-11.600 13H182.8z" fill="none" stroke="#fff" stroke-width="1"/><path d="M133.5 1H193.5l-12.500 14H121.0z" fill="url(#tg)"/><path d="M133.7 1.500H191.9l-11.600 13H122.3z" fill="none" stroke="#fff" stroke-width="1"/><path d="M178.5 15l3-3.500 0.800 3.500z" fill="#6e8fc4"/><path d="M73 1H133l-12.500 14H60.5z" fill="url(#tg)"/><path d="M73.2 1.500H131.4l-11.600 13H61.8z" fill="none" stroke="#fff" stroke-width="1"/><path d="M118.0 15l3-3.500 0.800 3.500z" fill="#6e8fc4"/>
<path d="M2.500 0V15h57.500L72.500 0z" fill="url(#tg1)"/>
<path d="M2.500 1V14l1.500 1.500h56L73 1" fill="none" stroke="#8fa9d3"/>
<path d="M58.500 15.500l3-3.500 0.800 3.500z" fill="#6e8fc4"/>
</svg>
<span style="left:72px;top:630px;font-size:12px;font-weight:bold;color:#15428b;letter-spacing:0.6px">Sheet1</span>
<span style="left:134px;top:630px;font-size:12px;color:#15428b;letter-spacing:0.15px">Sheet2</span>
<span style="left:194px;top:630px;font-size:12px;color:#15428b;letter-spacing:0.15px">Sheet3</span>
<!-- h scrollbar -->
<div style="left:706px;top:628px;width:473px;height:15px;background:linear-gradient(#7c9bcd,#8aa7d6)"></div>
<div style="left:707px;top:628px;width:8px;height:14px;background:linear-gradient(90deg,#fff,#e6eef9);border:1px solid #6b88b8;box-sizing:border-box"></div>
<div style="left:710px;top:631px;width:1px;height:8px;background:#5f7db2"></div>
<svg style="left:720px;top:630px" width="8" height="11"><path d="M5.300 1v9l-5-4.500z" fill="#3f5584"/></svg>
<div style="left:733px;top:629px;width:369px;height:13px;border-radius:1px;background:linear-gradient(#f3f6fa,#dfe6ef 40%,#b9c5d6 85%,#a9b6ca);box-shadow:0 0 0 1px #4f6aa6"></div>
<div style="left:914px;top:632px;width:7px;height:7px;background:repeating-linear-gradient(90deg,#6d7f9c 0,#6d7f9c 1px,transparent 1px,transparent 2px)"></div>
<svg style="left:1158px;top:630px" width="8" height="11"><path d="M1.5 1v9l5-4.5z" fill="#3a4f78"/></svg>
<div style="left:1170px;top:628px;width:8px;height:14px;background:linear-gradient(90deg,#fff,#e6eef9);border:1px solid #6b88b8;box-sizing:border-box"></div>
<div style="left:1173px;top:631px;width:1px;height:8px;background:#5f7db2"></div>
<!-- v scrollbar -->
<div style="left:1178px;top:174px;width:1px;height:453px;background:#a9c8f0"></div>
<div id="vsb" style="left:1179px;top:174px;width:14px;height:469px;background:linear-gradient(90deg,#7696c8,#809fd0)"></div>
<div style="left:1179px;top:174px;width:14px;height:7px;background:#fff;border:1px solid #6b88b8;box-sizing:border-box"></div>
<div style="left:1183px;top:177px;width:7px;height:1px;background:#6b88b8"></div>
<svg style="left:1181px;top:187px" width="11" height="7"><path d="M1 5.500h9l-4.500-4.500z" fill="#435a8a"/></svg>
<div style="left:1180px;top:200px;width:13px;height:132px;border-radius:1px;background:linear-gradient(90deg,#f3f6fa,#dfe6ef 40%,#b9c5d6 85%,#a9b6ca);box-shadow:0 0 0 1px #4f6aa6"></div>
<div style="left:1183px;top:262px;width:7px;height:7px;background:repeating-linear-gradient(180deg,#6d7f9c 0,#6d7f9c 1px,transparent 1px,transparent 2px)"></div>
<svg style="left:1181px;top:616px" width="11" height="7"><path d="M1 1h9l-4.500 4.500z" fill="#435a8a"/></svg>
<!-- status bar -->
<div id="statusbar"></div>
<span style="left:7px;top:649px;font-size:11px;color:#15428b">Ready</span>
<div style="left:46px;top:645px;width:1px;height:20px;background:#9db9e2;box-shadow:1px 0 0 #eaf2fc"></div>
<div id="sbright" style="left:933px;top:644px;width:260px;height:21px;background:linear-gradient(#c0d6f4 0,#a9c5ec 7px,#84a5da 8px,#8fafe0 21px);border-left:1px solid #7f9fd0;box-shadow:-1px 0 0 #e4eefb"></div>
<div style="left:939px;top:645px;width:57px;height:18px;border-radius:3px;background:linear-gradient(#dbe7f7,#c2d4ee);border:1px solid #94aed8;box-sizing:border-box"></div>
<div style="left:940px;top:646px;width:18px;height:16px;border-radius:2px 0 0 2px;background:linear-gradient(#fbd9a0,#f9c872 50%,#f8bb52 51%,#fde6a4);box-shadow:0 0 0 1px #efb462"></div>
<span style="left:1005px;top:649px;font-size:11px;color:#15428b;letter-spacing:-0.4px">100%</span>

<svg id="ic-vnormal" style="left:942px;top:648px" width="15" height="12"><rect x="0.500" y="0.500" width="14" height="11" fill="#fff" stroke="#4f4f57" stroke-width="1"/><path d="M0.500 4h14M0.500 7.500h14M5 0.500v11M10 0.500v11" stroke="#55555d" stroke-width="1"/></svg>
<svg id="ic-vlayout" style="left:961px;top:648px" width="13" height="12"><rect x="0.500" y="0.500" width="12" height="11" fill="#b9bcc4" stroke="#5d6068" stroke-width="1"/><rect x="3.500" y="2.500" width="6" height="7" fill="#fff" stroke="#5d6068" stroke-width="0.800"/><path d="M5 4.500h3M5 6h3M5 7.500h3" stroke="#9a9ea8" stroke-width="0.700"/></svg>
<svg id="ic-vbreak" style="left:980px;top:648px" width="13" height="12"><rect x="0.500" y="0.500" width="12" height="11" fill="#b9bcc4" stroke="#5d6068" stroke-width="1"/><rect x="1.500" y="1.500" width="3" height="5.500" fill="#fff"/><rect x="5.500" y="1.500" width="3" height="5.500" fill="#fff"/></svg>
<svg id="ic-zoom" style="left:1038px;top:644px" width="155" height="21">
<defs><radialGradient id="zb" cx="0.500" cy="0.350" r="0.700"><stop offset="0" stop-color="#ffffff"/><stop offset="0.700" stop-color="#dfe6f1"/><stop offset="1" stop-color="#b9c6da"/></radialGradient></defs>
<path d="M18 9.500h102" stroke="#5f80b8" stroke-width="1"/><path d="M18 10.500h102" stroke="#e9f0fb" stroke-width="1"/>
<circle cx="10" cy="10" r="7.300" fill="url(#zb)" stroke="#2f5ba8" stroke-width="1"/><rect x="6" y="9" width="8" height="2" fill="#4b4f5a"/>
<circle cx="128" cy="10" r="7.300" fill="url(#zb)" stroke="#2f5ba8" stroke-width="1"/><rect x="124" y="9" width="8" height="2" fill="#4b4f5a"/><rect x="127" y="6" width="2" height="8" fill="#4b4f5a"/>
<path d="M64.500 3.500h8v8l-4 4.500-4-4.500z" fill="#f1f5fb" stroke="#2f5ba8" stroke-width="1"/><path d="M68.500 6v5" stroke="#6b88b8" stroke-width="1"/>
<g fill="#3f4f73"><rect x="153" y="7" width="2" height="2"/><rect x="149" y="11" width="2" height="2"/><rect x="153" y="11" width="2" height="2"/><rect x="145" y="15" width="2" height="2"/><rect x="149" y="15" width="2" height="2"/><rect x="153" y="15" width="2" height="2"/></g>
</svg>
<svg id="ic-newsheet" style="left:253px;top:628px" width="16" height="14"><defs><linearGradient id="nsg" x1="0" y1="0" x2="1" y2="1"><stop offset="0" stop-color="#fff"/><stop offset="1" stop-color="#c3cfe2"/></linearGradient></defs><path d="M4 3.500h10.500v8h-3.500l-1 1h-2l-1-1h-1.500l-1.500-1.500z" fill="url(#nsg)" stroke="#4f6fa8" stroke-width="0.900"/><g stroke="#e8860c" stroke-width="1.100"><path d="M4.500 1v7M1 4.500h7M2 2l5 5M7 2l-5 5"/></g><circle cx="4.500" cy="4.500" r="1.300" fill="#fff8d8"/></svg>
<!--/BOTTOM-->
<!--OVERLAY-->
<!-- QAT -->
<div id="qat" style="left:20px;top:8px;width:122px;height:22px;box-sizing:border-box;border:1px solid #a7abb3;border-radius:0 11px 11px 0;background:linear-gradient(#f7f9fc,#f1f4f9)"></div>
<svg id="ic-save" style="left:52px;top:12px" width="14" height="14"><defs><linearGradient id="sv" x1="0" y1="0" x2="1" y2="1"><stop offset="0" stop-color="#6b7fd6"/><stop offset="1" stop-color="#1a2f8f"/></linearGradient><linearGradient id="sv2" x1="0" y1="0" x2="1" y2="1"><stop offset="0" stop-color="#fff"/><stop offset="1" stop-color="#b9c2d8"/></linearGradient></defs><path d="M0.5 0.5h13v13h-12l-1-1z" fill="url(#sv)"/><rect x="2.5" y="0.5" width="9" height="7" fill="url(#sv2)"/><rect x="3.5" y="9" width="7" height="4.5" fill="#1d1d2b"/><rect x="5" y="10" width="2.5" height="3" fill="#e8ecf5"/></svg>
<svg id="ic-undo" style="left:74px;top:11px" width="14" height="14"><path d="M1 1.5l0.8 6.5 6-1.2-2-1.6c1.5-1.2 3.8-0.6 4.2 1.6 0.4 2.2-1 4.4-3.4 5.6 4.2-0.6 6.6-3.6 6-7C12 2 8.2 0.4 4.6 3.4z" fill="#2a5fc9"/><path d="M1 1.5l0.8 6.5 6-1.2-2-1.6c1.5-1.2 3.8-0.6 4.2 1.6" fill="none" stroke="#6d9bea" stroke-width="0.6"/></svg>
<svg style="left:93px;top:17px" width="6" height="4"><path d="M0 0h6l-3 3.5z" fill="#3b62ac"/></svg>
<svg id="ic-redo" style="left:105px;top:11px" width="14" height="14"><path d="M13 1.5l-0.8 6.5-6-1.2 2-1.6c-1.5-1.2-3.8-0.6-4.2 1.6-0.4 2.2 1 4.4 3.4 5.6-4.2-0.6-6.6-3.6-6-7C2 2 5.800 0.4 9.400 3.4z" fill="#9db3d6"/></svg>
<svg style="left:125px;top:17px" width="6" height="4"><path d="M0 0h6l-3 3.500z" fill="#b4b8c0"/></svg>
<svg style="left:149px;top:15px" width="7" height="7"><rect x="0" y="0" width="7" height="1.500" fill="#15357f"/><path d="M0 3h7l-3.500 3.800z" fill="#15357f"/></svg>
<!-- window controls -->
<svg style="left:1070px;top:8px" width="115" height="20"><path d="M5 9.500h10" stroke="#000" stroke-width="1.100"/><rect x="50.500" y="4.500" width="9" height="9" fill="none" stroke="#000" stroke-width="1.100"/><path d="M96 4.200l10 10M106 4.200l-10 10" stroke="#000" stroke-width="1.100"/></svg>
<!-- help and mdi controls -->
<svg style="left:1109px;top:35px" width="84" height="17"><defs><radialGradient id="hg" cx="0.400" cy="0.300" r="0.800"><stop offset="0" stop-color="#5f95ea"/><stop offset="0.600" stop-color="#2456c2"/><stop offset="1" stop-color="#16389a"/></radialGradient><linearGradient id="mx" x1="0" y1="0" x2="0" y2="1"><stop offset="0" stop-color="#5c5c5c"/><stop offset="1" stop-color="#a0a4ac"/></linearGradient></defs><circle cx="8" cy="8.300" r="7" fill="#3f6fcf"/><circle cx="8" cy="8.300" r="6.200" fill="url(#hg)" stroke="#fff" stroke-width="1"/><text x="8" y="12.300" font-family="Liberation Sans, sans-serif" font-size="11" font-weight="bold" fill="#fff" text-anchor="middle">?</text><rect x="26" y="9.500" width="7.500" height="2" fill="#767676"/><path d="M47.500 6.500h7v4.500h-7zM49.500 6v-1.500h6.500v4.500h-1.500" fill="none" stroke="#7c7c80" stroke-width="1"/><rect x="47" y="5.500" width="8" height="1.800" fill="#6a6a6a"/><rect x="49" y="3.800" width="7.500" height="1.500" fill="#6a6a6a"/><path d="M71 4.500l7.500 7M78.500 4.500l-7.500 7" stroke="url(#mx)" stroke-width="2.300"/></svg>
<!-- office button backdrop inside red box -->
<div style="left:3px;top:5px;width:43px;height:27px;background:#fff"></div>
<div style="left:3px;top:32px;width:43px;height:22px;background:#bfdbff"></div>
<svg style="left:28px;top:5px" width="20" height="28"><path d="M6 3.500c6 1 10 6 10.500 13 0.200 3 0 7-0.500 11" fill="none" stroke="#b5b9c2" stroke-width="1"/><path d="M6 3.500c6 1 10 6 10.500 13 0.200 3 0 7-0.500 11h4v-24z" fill="#f4f6fa"/></svg>
<!-- office button -->
<svg id="officebtn" style="left:2px;top:9px" width="40" height="40">
<defs>
<linearGradient id="ob2" x1="0" y1="0" x2="0" y2="1"><stop offset="0" stop-color="#fbfcfd"/><stop offset="0.300" stop-color="#eef1f6"/><stop offset="0.500" stop-color="#dde3ec"/><stop offset="0.520" stop-color="#c6d0df"/><stop offset="0.800" stop-color="#e3e9f2"/><stop offset="1" stop-color="#ffffff"/></linearGradient>
<linearGradient id="og1" x1="0" y1="0" x2="0" y2="1"><stop offset="0" stop-color="#cf1d1d"/><stop offset="0.450" stop-color="#dc4a1c"/><stop offset="1" stop-color="#e58a1f"/></linearGradient>
<linearGradient id="og2" x1="0" y1="0" x2="0" y2="1"><stop offset="0" stop-color="#f9c566"/><stop offset="1" stop-color="#f09a1f"/></linearGradient>
</defs>
<circle cx="19.500" cy="19.300" r="18.300" fill="#c9d2e0" opacity="0.600"/>
<circle cx="19.500" cy="19.300" r="17.600" fill="url(#ob2)" stroke="#8996ad" stroke-width="1"/>
<circle cx="19.500" cy="19.300" r="16.400" fill="none" stroke="#fff" stroke-width="0.900" opacity="0.850"/>
<path d="M18.400 14.500V11.200a1.900 1.900 0 0 0 -1.900 -1.900H11.300a1.900 1.900 0 0 0 -1.900 1.900V16.300a1.900 1.900 0 0 0 1.900 1.900H15" fill="none" stroke="url(#og1)" stroke-width="2.700" stroke-linecap="round"/>
<circle cx="18.500" cy="18.300" r="1.400" fill="#e23a2a"/>
<path d="M22.300 14.100H25.700a1.400 1.400 0 0 1 1.400 1.400V17" fill="none" stroke="#3b86dc" stroke-width="2" stroke-linecap="round"/>
<circle cx="22.700" cy="18.300" r="1.400" fill="#2f74d0"/><circle cx="26.800" cy="18.300" r="1.400" fill="#4a92e4"/>
<path d="M16.300 22.600H13a1.500 1.500 0 0 0 -1.500 1.500V27.700a1.500 1.500 0 0 0 1.500 1.500H18.400V25.800" fill="none" stroke="url(#og2)" stroke-width="2.600" stroke-linecap="round" stroke-linejoin="round"/>
<circle cx="18.500" cy="22.500" r="1.300" fill="#f6b04a"/>
<path d="M22.500 25.500V28.500H28.800V23.200H26.800" fill="none" stroke="#5e9a37" stroke-width="2.600" stroke-linejoin="round" stroke-linecap="round"/>
<rect x="23.800" y="26" width="4" height="2.800" fill="#5e9a37"/>
<rect x="24.300" y="24.600" width="3" height="1.800" fill="#f4f7ee"/>
<circle cx="22.700" cy="22.500" r="1.300" fill="#c8d832"/><circle cx="26.500" cy="22.600" r="1.100" fill="#d9a23a"/>
</svg>
<!-- red annotation box -->
<div id="redbox" style="left:-2px;top:0;width:53px;height:59px;box-sizing:border-box;border:5px solid #ed1c24"></div>
<!--/OVERLAY-->
</div>
</body>
</html>
